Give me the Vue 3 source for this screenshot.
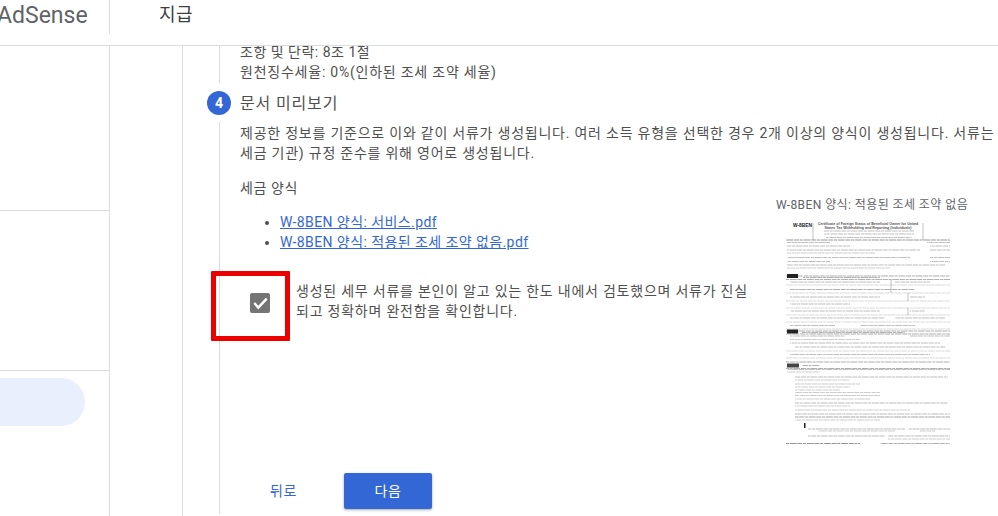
<script setup>
import { ref } from 'vue';

const forms = ref([
  { id: 1, name: 'W-8BEN 양식: 서비스.pdf' },
  { id: 2, name: 'W-8BEN 양식: 적용된 조세 조약 없음.pdf' },
]);

// page coordinates of the scanned form: x1, x2, y, strength
const docLines = [
  [824, 914, 231, 0.5], [824, 914, 234, 0.5], [826, 912, 237.5, 0.5],
  [786, 950, 240, 0.8],
  [787, 830, 242.5, 0.5], [927, 950, 242.5, 0.5], [787, 850, 246, 0.5], [930, 950, 246, 0.5],
  [787, 920, 250, 0.5], [930, 950, 250, 0.5], [787, 875, 253, 0.4],
  [787, 910, 257.5, 0.5], [930, 950, 257.5, 0.5], [787, 830, 261.5, 0.5], [930, 950, 261.5, 0.5],
  [787, 945, 265, 0.5], [787, 890, 268, 0.4],
  [786, 950, 276, 0.6], [803, 880, 277.5, 0.6], [786, 950, 279.5, 0.6],
  [790, 880, 282, 0.5], [895, 930, 282, 0.5], [786, 950, 285, 0.3],
  [790, 915, 289.5, 0.6], [786, 950, 293, 0.3],
  [790, 880, 297, 0.5], [910, 925, 297, 0.5], [786, 950, 301, 0.3],
  [790, 850, 304, 0.5], [786, 950, 308, 0.3],
  [790, 880, 311, 0.5], [910, 925, 311, 0.5], [786, 950, 315, 0.3],
  [790, 885, 318, 0.5], [895, 945, 318, 0.5], [786, 950, 322, 0.3],
  [790, 835, 325.5, 0.5], [860, 915, 325.5, 0.5], [786, 950, 329, 0.3],
  [786, 950, 331, 0.6], [802, 905, 332.5, 0.6], [786, 950, 334, 0.6],
  [790, 845, 336, 0.5], [910, 950, 336, 0.5], [790, 860, 339.5, 0.4],
  [790, 940, 343, 0.5], [795, 945, 347, 0.5], [786, 950, 351, 0.3],
  [790, 930, 354.5, 0.5], [786, 950, 358, 0.3],
  [786, 950, 362, 0.6], [802, 820, 365.5, 0.6], [786, 950, 368.5, 0.6],
  [787, 950, 369.5, 0.5], [787, 820, 372, 0.4],
  [795, 948, 377, 0.5], [795, 850, 380, 0.4], [795, 860, 384, 0.4], [795, 850, 387, 0.4], [795, 840, 390, 0.4],
  [795, 880, 392.5, 0.4], [795, 880, 395.5, 0.4], [795, 870, 399, 0.4],
  [795, 948, 403, 0.5], [795, 850, 406, 0.4], [795, 910, 410, 0.4],
  [795, 950, 414, 0.5], [795, 950, 417, 0.7], [795, 880, 420, 0.4],
  [808, 905, 429, 0.5], [908, 950, 429, 0.5], [818, 895, 431, 0.4], [920, 935, 431, 0.4],
  [808, 885, 436, 0.5], [888, 950, 436, 0.5], [888, 950, 439, 0.4],
  [786, 860, 443.5, 0.8], [880, 950, 443.5, 0.6],
];

const docRules = [
  [813, 223, 813, 240], [923, 223, 923, 240], [891, 280, 891, 293], [908, 293, 908, 301], [908, 308, 908, 315],
];
</script>

<template>
  <div class="page">
    <header class="topbar">
      <div class="brand">AdSense</div>
      <h1 class="title">지급</h1>
    </header>

    <div class="layout">
      <aside class="sidebar">
        <div class="side-group"></div>
        <div class="side-group"></div>
        <div class="side-active"></div>
      </aside>

      <main class="main">
        <div class="step-body step-prev">
          <p class="treaty">조항 및 단락: 8조 1절</p>
          <p>원천징수세율: 0%(인하된 조세 조약 세율)</p>
        </div>

        <div class="step-head">
          <span class="step-num">4</span>
          <span class="step-title">문서 미리보기</span>
        </div>

        <div class="step-body step-current">
          <p>제공한 정보를 기준으로 이와 같이 서류가 생성됩니다. 여러 소득 유형을 선택한 경우 2개 이상의 양식이 생성됩니다. 서류는</p>
          <p>세금 기관) 규정 준수를 위해 영어로 생성됩니다.</p>

          <div class="forms">
            <div class="forms-left">
              <p class="forms-title">세금 양식</p>
              <ul class="form-list">
                <li v-for="form in forms" :key="form.id"><a href="#">{{ form.name }}</a></li>
              </ul>

              <div class="confirm">
                <span class="check">
                  <svg width="20" height="20" viewBox="0 0 20 20">
                    <path d="M4.3 10l4 4.6 8.4-9" fill="none" stroke="#fff" stroke-width="2.4" />
                  </svg>
                  <span class="highlight"></span>
                </span>
                <p>생성된 세무 서류를 본인이 알고 있는 한도 내에서 검토했으며 서류가 진실되고 정확하며 완전함을 확인합니다.</p>
              </div>
            </div>

            <div class="preview">
              <div class="preview-name">W-8BEN 양식: 적용된 조세 조약 없음</div>
              <svg class="doc" width="172" height="235" viewBox="783 218 172 235">
                <defs>
                  <filter id="soft"><feGaussianBlur stdDeviation="0.5" /></filter>
                </defs>
                <text x="793" y="226.5" class="doc-code" textLength="19" lengthAdjust="spacingAndGlyphs">W-8BEN</text>
                <text x="868" y="225" class="doc-head" text-anchor="middle">Certificate of Foreign Status of Beneficial Owner for United</text>
                <text x="868" y="229" class="doc-head" text-anchor="middle">States Tax Withholding and Reporting (Individuals)</text>
                <g filter="url(#soft)">
                  <rect x="787" y="274" width="11" height="4" fill="#222" />
                  <rect x="787" y="329.5" width="11" height="4" fill="#222" />
                  <rect x="787" y="363.5" width="12" height="4" fill="#444" />
                  <rect x="804" y="423" width="1.5" height="5" fill="#222" />
                  <line v-for="(l, i) in docLines" :key="i" :x1="l[0]" :x2="l[1]" :y1="l[2]" :y2="l[2]" stroke="#333" stroke-width="0.8" stroke-dasharray="5 0.7 3 0.7 7 0.7" :stroke-dashoffset="i * 3" :stroke-opacity="l[3] * 0.8" />
                  <line v-for="(r, i) in docRules" :key="'r' + i" :x1="r[0]" :y1="r[1]" :x2="r[2]" :y2="r[3]" stroke="#333" stroke-width="0.5" stroke-opacity="0.6" />
                </g>
              </svg>
            </div>
          </div>

          <div class="actions">
            <a class="btn-back" href="#">뒤로</a>
            <button class="btn-next" type="button">다음</button>
          </div>
        </div>
      </main>
    </div>
  </div>
</template>

<style>
html, body {
  margin: 0;
  overflow: hidden;
  background: #fff;
}
</style>

<style scoped>
.page {
  width: 998px;
  height: 516px;
  overflow: hidden;
  font-family: Roboto, "Noto Sans CJK KR", sans-serif;
  font-size: 14px;
  line-height: 20px;
  color: #505050;
}

p {
  margin: 0;
  white-space: nowrap;
  letter-spacing: 0.77px;
}

.treaty {
  letter-spacing: 0.5px;
}

.topbar {
  display: flex;
  height: 45px;
  border-bottom: 1px solid #dadce0;
}

.brand {
  width: 109px;
  height: 34px;
  border-right: 1px solid #dadce0;
  font-size: 23px;
  line-height: 31px;
  color: #5f6368;
  text-indent: -3px;
  flex: none;
}

.title {
  margin: 0 0 0 49px;
  font-size: 18px;
  font-weight: 400;
  line-height: 30px;
  letter-spacing: 0.4px;
  color: #3c4043;
}

.layout {
  display: flex;
  height: 470px;
  overflow: hidden;
}

.sidebar {
  width: 109px;
  flex: none;
  border-right: 1px solid #dadce0;
}

.side-group:first-child {
  height: 164px;
  border-bottom: 1px solid #dadce0;
}

.side-group:nth-child(2) {
  height: 159px;
  border-bottom: 1px solid #dadce0;
}

.side-active {
  width: 85px;
  height: 48px;
  margin-top: 7px;
  background: #e8f0fe;
  border-radius: 0 24px 24px 0;
}

.main {
  margin-left: 72px;
  flex: 1;
  min-width: 0;
  border-left: 1px solid #dadce0;
}

.step-body {
  margin-left: 36px;
  padding-left: 20px;
  border-left: 1px solid #dadce0;
}

.step-prev {
  margin-top: -4px;
  height: 41px;
}

.step-head {
  display: flex;
  align-items: center;
  gap: 9px;
  height: 39px;
  margin-left: 24px;
}

.step-num {
  width: 24px;
  height: 24px;
  border-radius: 50%;
  background: #3367d6;
  color: #fff;
  font-weight: 700;
  text-align: center;
  line-height: 24px;
}

.step-title {
  font-size: 16px;
  letter-spacing: 0.85px;
  padding-top: 2px;
}

.step-current {
  height: 392px;
  padding-top: 1px;
  box-sizing: border-box;
  position: relative;
}

.forms {
  display: flex;
  margin-top: 15px;
}

.forms-left {
  width: 536px;
  flex: none;
}

.forms-title {
  letter-spacing: 0.6px;
}

.form-list {
  margin: 14px 0 0;
  padding-left: 40px;
  letter-spacing: 0.42px;
}

.form-list a {
  color: #3367d6;
}

.confirm {
  display: flex;
  align-items: flex-start;
  margin-top: 29px;
  width: 510px;
}

.confirm p {
  white-space: normal;
  width: 460px;
  margin-left: 26px;
}

.check {
  position: relative;
  width: 20px;
  height: 20px;
  margin: 12px 0 0 10px;
  flex: none;
  border-radius: 2px;
  background: #757575;
}

.check svg {
  display: block;
}

.highlight {
  position: absolute;
  left: -39px;
  top: -22px;
  width: 69px;
  height: 60px;
  border: 5px solid #ec0000;
  border-radius: 1px;
}

.preview {
  margin-top: 15px;
  padding-top: 2px;
  white-space: nowrap;
}

.preview-name {
  font-size: 12px;
  line-height: 20px;
  letter-spacing: 0.42px;
  color: #5f6368;
}

.doc {
  display: block;
  margin: 3px 0 0 7px;
}

.doc-code {
  font-family: "Liberation Sans", sans-serif;
  font-size: 6px;
  font-weight: 700;
  fill: #222;
}

.doc-head {
  font-family: "Liberation Sans", sans-serif;
  font-size: 3.6px;
  font-weight: 700;
  fill: #555;
}

.actions {
  position: absolute;
  left: 50px;
  bottom: 5px;
  display: flex;
  align-items: center;
}

.btn-back {
  width: 56px;
  letter-spacing: 0.5px;
  color: #3367d6;
  text-decoration: none;
}

.btn-next {
  width: 88px;
  height: 36px;
  margin-left: 18px;
  border: 0;
  border-radius: 2px;
  background: #3367d6;
  color: #fff;
  font: inherit;
  letter-spacing: 0.5px;
  box-shadow: 0 1px 3px rgba(0, 0, 0, 0.35);
}
</style>
